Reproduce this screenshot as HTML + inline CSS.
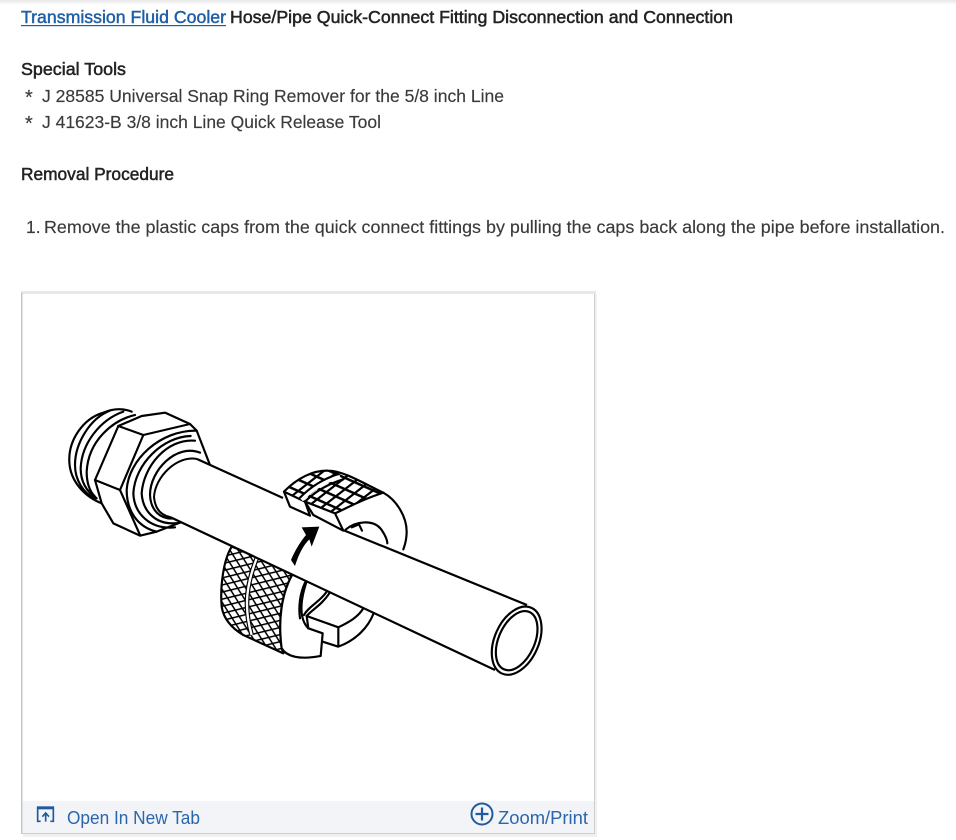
<!DOCTYPE html>
<html><head><meta charset="utf-8"><style>
html,body{margin:0;padding:0;background:#fff;width:956px;height:840px;overflow:hidden}
svg{display:block;position:absolute;left:0;top:0}
text{font-family:"Liberation Sans",sans-serif;font-size:17.5px}
.h{fill:#222;stroke:#222;stroke-width:.5px}
.t{fill:#3a3a3a;stroke:#3a3a3a;stroke-width:.15px}
.l{fill:#1f5fa6;stroke:#1f5fa6;stroke-width:.45px}
.b{fill:#2a66ad;font-size:18px}
.d{fill:none;stroke:#000;stroke-width:6.5;stroke-linejoin:round;stroke-linecap:round}
.w{fill:#fff;stroke:#000;stroke-width:6.5;stroke-linejoin:round}
</style></head><body>
<svg width="956" height="840" viewBox="0 0 956 840" xmlns="http://www.w3.org/2000/svg">
<defs>
<linearGradient id="top" x1="0" y1="0" x2="0" y2="1"><stop offset="0" stop-color="#e6e6e6"/><stop offset="1" stop-color="#fff"/></linearGradient>
<pattern id="g1" width="31" height="31" patternUnits="userSpaceOnUse" patternTransform="rotate(24) skewX(-28)">
<rect width="31" height="31" fill="#fff"/><path d="M0 0H31M0 0V31" stroke="#000" stroke-width="15"/></pattern>
<pattern id="g2" width="25" height="25" patternUnits="userSpaceOnUse" patternTransform="rotate(22) scale(1 .72) rotate(45)">
<rect width="25" height="25" fill="#fff"/><path d="M0 0H25M0 0V25" stroke="#000" stroke-width="11"/></pattern>
</defs>
<rect width="956" height="5" fill="url(#top)"/>

<text x="21" y="23" class="l" textLength="205" lengthAdjust="spacingAndGlyphs">Transmission Fluid Cooler</text>
<rect x="21" y="25" width="205" height="1.2" fill="#1f5fa6"/>
<text x="230" y="23" class="h" textLength="503" lengthAdjust="spacingAndGlyphs">Hose/Pipe Quick-Connect Fitting Disconnection and Connection</text>
<text x="21" y="75" class="h" textLength="105" lengthAdjust="spacingAndGlyphs">Special Tools</text>
<text x="25" y="104" class="t" style="font-size:20px">*</text>
<text x="42" y="102" class="t" textLength="462" lengthAdjust="spacingAndGlyphs">J 28585 Universal Snap Ring Remover for the 5/8 inch Line</text>
<text x="25" y="130" class="t" style="font-size:20px">*</text>
<text x="42" y="128" class="t" textLength="339" lengthAdjust="spacingAndGlyphs">J 41623-B 3/8 inch Line Quick Release Tool</text>
<text x="21" y="180" class="h" textLength="153" lengthAdjust="spacingAndGlyphs">Removal Procedure</text>
<text x="26" y="233" class="t">1.</text>
<text x="44" y="233" class="t" textLength="901" lengthAdjust="spacingAndGlyphs">Remove the plastic caps from the quick connect fittings by pulling the caps back along the pipe before installation.</text>

<!-- card -->
<rect x="23" y="294" width="574" height="543" fill="#f0f0f0"/>
<rect x="21.5" y="292.5" width="573" height="541" fill="#fff" stroke="#cfcfcf"/>
<rect x="21" y="291" width="575" height="3" fill="#e8e8e8"/>
<rect x="21" y="293" width="1.5" height="541" fill="#c6c6c6"/>
<rect x="22.5" y="801" width="571.5" height="32" fill="#f2f4f8"/>

<!-- fitting -->
<g transform="translate(60 400) scale(.33333)">
<path class="d" d="M215 35C190 25 160 25 130 38C70 55 25 120 28 185C30 240 70 290 130 312"/>
<path class="d" d="M150 32C90 55 45 130 45 195C45 240 70 280 105 295"/>
<path class="d" d="M190 35C120 60 65 130 62 205C62 245 80 275 110 295"/>
<path class="d" d="M225 45C160 60 85 120 80 215C80 250 90 275 105 290"/>
<path class="w" d="M175 78L245 48L315 38L390 72L410 92L450 195L400 320L360 368L290 395L240 407L160 370L125 310L105 240Z"/>
<path class="d" d="M175 78L250 105L390 72M250 105L180 270L240 405M105 240L180 270"/>
<path class="d" d="M410 92C300 90 205 180 200 270C200 330 230 380 290 395"/>
<path class="d" d="M392 108C310 110 225 190 220 280C222 340 270 390 345 382"/>
<path class="d" d="M405 122C320 115 250 200 245 280C248 335 290 380 360 368"/>
<path class="d" d="M420 158C350 130 270 210 270 285C272 330 300 360 345 355"/>
</g>

<!-- lower ring (behind pipe) -->
<g transform="translate(200 540) scale(.33333)">
<path d="M95 20L285 90C240 160 235 250 245 325L250 340L130 285C95 265 70 235 65 200C60 140 70 60 95 20Z" fill="url(#g2)" stroke="#000" stroke-width="6.5" stroke-linejoin="round"/>
<path d="M172 50C140 130 130 200 155 285" fill="none" stroke="#000" stroke-width="14"/>
<path d="M172 50C140 130 130 200 155 285" fill="none" stroke="#fff" stroke-width="7"/>
<path d="M285 90C240 160 235 250 245 325C260 350 300 360 362 348L368 280L325 265C300 240 295 190 325 110Z" class="w"/>
<path d="M315 128C300 160 295 200 300 235" class="d"/>
<path d="M380 155C360 185 325 200 312 225M388 160C365 195 335 210 320 228" class="d"/>
<path d="M320 228L415 262L415 320L368 305M415 262C450 245 475 230 490 205M415 320C470 300 505 260 520 222M320 228L325 265" class="d"/>
</g>

<!-- pipe -->
<path d="M199 460C177 455 155 477 154 497C155 508 160 515 170 517L495 670L527 605Z" fill="#fff"/>
<path d="M197 459C177 455 155 477 154 497C155 508 160 515 170 517" fill="none" stroke="#000" stroke-width="2"/>
<path d="M197 459L283 498M343 530L527 605M170 517L495 670" fill="none" stroke="#000" stroke-width="2.2"/>
<g transform="translate(440 580) scale(.33333)">
<ellipse cx="230" cy="182" rx="66" ry="108" transform="rotate(24 230 182)" fill="#fff" stroke="#000" stroke-width="6.5"/>
<ellipse cx="230" cy="182" rx="54" ry="94" transform="rotate(24 230 182)" fill="#fff" stroke="#000" stroke-width="6.5"/>
</g>

<!-- upper ring -->
<g transform="translate(260 450) scale(.33333)">
<path d="M72 125C110 85 160 60 205 62C250 62 310 100 370 128C300 150 260 175 225 190L135 155Z" fill="url(#g1)" stroke="#000" stroke-width="6.5" stroke-linejoin="round"/>
<path d="M72 125L90 170L150 197L135 155Z" class="w"/>
<path d="M135 155L160 195L250 242L225 190Z" class="w"/>
<path d="M125 150C160 112 200 92 240 80" fill="none" stroke="#fff" stroke-width="11"/>
<path d="M120 143C155 107 195 85 235 72M135 155C170 120 210 100 250 88" class="d"/>
<path d="M370 128C410 150 440 200 440 245C440 265 435 285 430 298" class="d"/>
<path d="M258 238C285 215 340 205 365 240C375 255 382 270 382 280" class="d"/>
<path d="M275 232L297 223L306 242" class="d"/>
<path d="M93 330C105 300 125 270 138 255L125 232L178 230L155 290L148 268C130 285 115 315 105 348Z" fill="#000"/>
</g>

<!-- footer icons -->
<g transform="translate(0 780) scale(.33333)" fill="none" stroke="#1f5c9e">
<path d="M122 124H113V82H160V124H151" stroke-width="5"/>
<rect x="111" y="79" width="51" height="9" fill="#1f5c9e" stroke="none"/>
<path d="M137 125V100M127 110L137 99L147 110" stroke-width="5"/>
</g>
<text x="67" y="824" class="b" textLength="133" lengthAdjust="spacingAndGlyphs">Open In New Tab</text>
<circle cx="482" cy="814" r="10.5" fill="none" stroke="#1f5c9e" stroke-width="2"/>
<path d="M475.5 814H488.5M482 807.5V820.5" stroke="#1f5c9e" stroke-width="2.2"/>
<text x="498" y="824" class="b" textLength="90" lengthAdjust="spacingAndGlyphs">Zoom/Print</text>
</svg>
</body></html>
